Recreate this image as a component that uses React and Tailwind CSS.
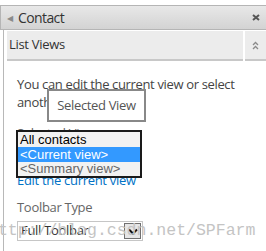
import React from 'react';

const ui = { fontFamily: '"Open Sans", "Noto Sans", sans-serif' };
const arial = { fontFamily: '"Liberation Sans", Arial, sans-serif' };

const App = () => {
  return (
    <div className="relative w-[266px] h-[251px] bg-white overflow-hidden" style={ui}>
      {/* header */}
      <div className="mt-[5px] h-[25px] flex items-center border-t border-b border-l border-[#b5b5b5] bg-gradient-to-b from-[#e8e8e8] to-[#d3d3d3]">
        <span className="ml-[6px] text-[8px] text-[#8a8a8a] leading-none">◀</span>
        <span className="ml-[5px] text-[14px] tracking-[-0.6px] text-[#333]">Contact</span>
        <svg className="ml-auto mr-[6px]" width="8" height="7" viewBox="0 0 8 7">
          <path d="M1 1 L7 6 M7 1 L1 6" stroke="#555" strokeWidth="2" />
        </svg>
      </div>

      <div className="ml-[3px] border-l border-[#b8b8b8] h-full pt-[1px]">
        {/* list views band */}
        <div className="flex h-[30px] ml-[3px]">
          <div className="flex-1 flex items-center bg-[#ececec] border-b-2 border-[#c8c8c8] pl-[2px]">
            <span className="text-[13px] tracking-[-0.3px] text-[#333]">List Views</span>
          </div>
          <div className="w-[21px] ml-[2px] flex items-center justify-center bg-[#ececec] border-b-2 border-[#c8c8c8]">
            <svg width="7" height="9" viewBox="0 0 7 9">
              <path d="M1 4 L3.5 1.5 L6 4 M1 8 L3.5 5.5 L6 8" stroke="#8a8a8a" strokeWidth="1.3" fill="none" />
            </svg>
          </div>
        </div>

        <div className="pl-[13px] pr-[4px]">
          <p className="mt-[14px] text-[13px] leading-[18px] tracking-[-0.35px] text-[#444]">
            You can edit the current view or select another view.
          </p>
          <div className="mt-[13px] text-[13px] leading-[18px] tracking-[-0.3px] text-[#666]">Selected View</div>
          <div className="mt-[29px] text-[13px] leading-[18px] tracking-[-0.3px] text-[#0072c6]">Edit the current view</div>
          <div className="mt-[9px] text-[13px] leading-[18px] tracking-[-0.3px] text-[#666]">Toolbar Type</div>
          <div className="mt-[5px] w-[126px] h-[20px] flex items-center border border-[#c6c6c6] bg-white">
            <span className="pl-[3px] text-[13px] text-[#333] tracking-[-0.3px]">Full Toolbar</span>
            <div className="ml-auto mr-[1px] w-[17px] h-[16px] flex items-center justify-center border border-[#707070] bg-[#e6e6e6]">
              <svg width="10" height="7" viewBox="0 0 10 7">
                <path d="M1 1.5 L5 5.5 L9 1.5" stroke="#111" strokeWidth="2" fill="none" />
              </svg>
            </div>
          </div>
        </div>
      </div>

      {/* tooltip */}
      <div className="absolute left-[47px] top-[89px] w-[99px] h-[33px] border-2 border-[#888] bg-white flex items-center justify-center">
        <span className="text-[13px] tracking-[-0.35px] text-[#555]">Selected View</span>
      </div>

      {/* open listbox */}
      <div className="absolute left-[16px] top-[130px] w-[126px] border-2 border-[#1a1a1a] bg-[#f2f2f2]" style={arial}>
        <div className="h-[15px] pl-[2px] text-[13px] leading-[15px] text-black">All contacts</div>
        <div className="h-[15px] pl-[2px] text-[13px] leading-[15px] text-white bg-[#3399ff]">&lt;Current view&gt;</div>
        <div className="h-[14px] pl-[2px] text-[13px] leading-[14px] text-[#666]">&lt;Summary view&gt;</div>
      </div>

      {/* watermark */}
      <div
        className="absolute left-[-12px] top-[222px] text-[16.5px] leading-[18px] text-[#c4c4c4] whitespace-nowrap pointer-events-none"
        style={{ fontFamily: '"Liberation Mono", "Courier New", monospace' }}
      >
        http://blog.csdn.net/SPFarm
      </div>
    </div>
  );
};

export default App;
